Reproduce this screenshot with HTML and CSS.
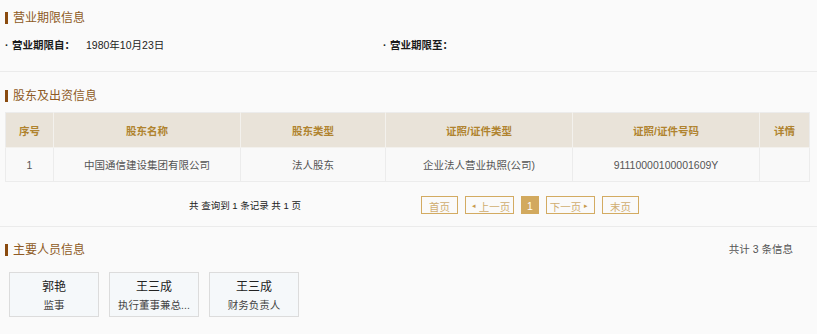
FILE: index.html
```html
<!DOCTYPE html>
<html lang="zh">
<head>
<meta charset="utf-8">
<link rel="stylesheet" href="styles.css">
</head>
<body>
<div class="page">
  <section class="block block-term">
    <h3 class="sec-title">营业期限信息</h3>
    <div class="fields">
      <div class="field"><span class="dot">·</span><span class="label">营业期限自：</span><span class="value">1980年10月23日</span></div>
      <div class="field field-right"><span class="dot">·</span><span class="label">营业期限至：</span><span class="value"></span></div>
    </div>
  </section>

  <section class="block block-holder">
    <h3 class="sec-title">股东及出资信息</h3>
    <table class="grid">
      <colgroup>
        <col class="c1"><col class="c2"><col class="c3"><col class="c4"><col class="c5"><col class="c6">
      </colgroup>
      <thead>
        <tr><th>序号</th><th>股东名称</th><th>股东类型</th><th>证照/证件类型</th><th>证照/证件号码</th><th>详情</th></tr>
      </thead>
      <tbody>
        <tr><td>1</td><td>中国通信建设集团有限公司</td><td>法人股东</td><td>企业法人营业执照(公司)</td><td>91110000100001609Y</td><td></td></tr>
      </tbody>
    </table>
    <div class="pager">
      <span class="pager-info">共 查询到 1 条记录 共 1 页</span>
      <div class="pager-btns">
        <span class="pbtn w-s">首页</span>
        <span class="pbtn w-l"><span class="arr">◂</span>上一页</span>
        <span class="pbtn active">1</span>
        <span class="pbtn w-l">下一页<span class="arr">▸</span></span>
        <span class="pbtn w-s">末页</span>
      </div>
    </div>
  </section>

  <section class="block block-people">
    <div class="people-head">
      <h3 class="sec-title">主要人员信息</h3>
      <span class="total">共计 3 条信息</span>
    </div>
    <div class="cards">
      <div class="card"><div class="name">郭艳</div><div class="role">监事</div></div>
      <div class="card"><div class="name">王三成</div><div class="role">执行董事兼总...</div></div>
      <div class="card"><div class="name">王三成</div><div class="role">财务负责人</div></div>
    </div>
  </section>
</div>
</body>
</html>
```

FILE: styles.css
```css
* { box-sizing: border-box; }
html, body { margin: 0; padding: 0; }
body {
  background: #fafafa;
  font-family: "Liberation Sans", "Noto Sans CJK SC", sans-serif;
  font-size: 10.5px;
  color: #333;
}
.page { width: 817px; }

.block { border-bottom: 1px solid #ebebeb; padding: 0 5px; }
.block-people { border-bottom: none; }

.sec-title {
  margin: 0;
  font-size: 12px;
  font-weight: normal;
  line-height: 16px;
  height: 16px;
  color: #8e5a25;
  display: flex;
  align-items: center;
}
.sec-title::before {
  content: "";
  width: 3px;
  height: 12px;
  background: #8a4b0f;
  margin-right: 5px;
}

.block-term { padding-top: 10px; padding-bottom: 18px; }
.fields { display: flex; margin-top: 11px; line-height: 16px; height: 16px; }
.field { display: flex; align-items: center; }
.field:first-child { width: 378px; }
.dot { width: 7px; color: #222; font-weight: bold; }
.label { font-weight: bold; color: #1a1a1a; width: 74px; }
.value { color: #222; }

.block-holder { padding-top: 16px; padding-bottom: 12px; }
.grid {
  margin-top: 8px;
  width: 804px;
  border-collapse: collapse;
  table-layout: fixed;
}
.c1 { width: 48px; } .c2 { width: 187px; } .c3 { width: 145px; }
.c4 { width: 187px; } .c5 { width: 187px; } .c6 { width: 50px; }
.grid th, .grid td {
  border: 1px solid #ececec;
  text-align: center;
  padding: 0;
}
.grid th {
  height: 35px;
  background: #e9e3d9;
  color: #b0832f;
  font-weight: bold;
  border-color: #f3f1ed;
}
.grid th { border-top-color: #ececec; }
.grid th:first-child { border-left-color: #ececec; }
.grid th:last-child { border-right-color: #ececec; }
.grid td { height: 34px; color: #555; background: #f9f9f9; }

.pager { display: flex; align-items: center; margin-top: 14px; height: 18px; padding-left: 184px; }
.pager-info { color: #222; width: 232px; font-size: 9.5px; }
.pager-btns { display: flex; gap: 7px; }
.pbtn {
  height: 18px;
  border: 1px solid #d3ab62;
  color: #d0ad70;
  display: flex;
  align-items: center;
  justify-content: center;
  font-size: 10.5px;
  padding-top: 2px;
}
.w-s { width: 37px; }
.w-l { width: 49px; }
.arr { font-size: 7px; margin: 0 3px; color: #c89a4c; }
.pbtn.active { width: 18px; background: #d2a95e; color: #fff; border-color: #d2a95e; }

.block-people { padding-top: 15px; }
.people-head { display: flex; justify-content: space-between; align-items: center; padding-right: 19px; }
.total { color: #555; margin-top: -3px; }
.cards { display: flex; gap: 10px; margin-top: 14px; padding-left: 4px; }
.card {
  width: 90px;
  height: 45px;
  border: 1px solid #dcdcdc;
  background: #f5f8fa;
  display: flex;
  flex-direction: column;
  align-items: center;
  padding-top: 6px;
}
.name { font-size: 12px; color: #222; line-height: 16px; }
.role { font-size: 10.5px; color: #444; line-height: 16px; margin-top: 2px; white-space: nowrap; }
```
